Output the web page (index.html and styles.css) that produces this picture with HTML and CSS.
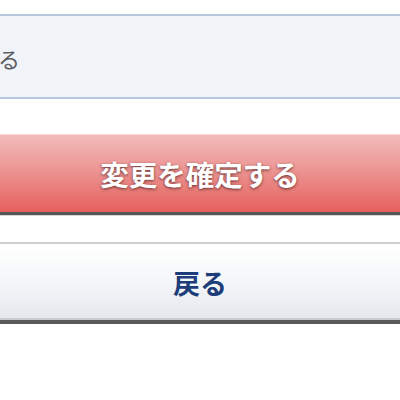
FILE: index.html
```html
<!DOCTYPE html>
<html lang="ja">
<head>
<meta charset="utf-8">
<link rel="stylesheet" href="styles.css">
</head>
<body>
<div class="page">
  <div class="field"><span class="field-text">る</span></div>
  <button class="btn btn-confirm" type="button">変更を確定する</button>
  <button class="btn btn-back" type="button">戻る</button>
</div>
</body>
</html>
```
FILE: styles.css
```css
html, body {
  margin: 0;
  padding: 0;
  background: #ffffff;
  width: 400px;
  height: 400px;
  overflow: hidden;
}
.page {
  display: flex;
  flex-direction: column;
  margin: 0 -10px;
  padding-top: 14px;
  font-family: "Noto Sans CJK JP", "Noto Sans", sans-serif;
}
.field {
  height: 81px;
  border-top: 2px solid #b7c8de;
  border-bottom: 2px solid #b7c8de;
  background: #f0f3f8;
  display: flex;
  align-items: center;
  padding-left: 10px;
  box-sizing: content-box;
}
.field-text {
  font-size: 22px;
  font-weight: 400;
  color: #5a5e64;
  line-height: 1;
  margin-left: -2px;
  margin-top: 2px;
}
.btn {
  display: flex;
  align-items: center;
  justify-content: center;
  width: 420px;
  border: none;
  padding: 0;
  margin: 0;
  font-family: "Noto Sans CJK JP", "Noto Sans", sans-serif;
  font-weight: bold;
  line-height: 1;
}
.btn-confirm {
  margin-top: 35px;
  height: 81px;
  border-top: 1px solid #f6d4d4;
  border-bottom: 3px solid #575757;
  background: linear-gradient(to bottom, #f3bcbc 0%, #ec9593 45%, #e5605b 100%);
  color: #ffffff;
  font-size: 28.5px;
  text-shadow: 0 1px 3px rgba(60, 20, 20, 0.75);
  box-shadow: 0 1px 0 #d8d8d8;
  padding-top: 2px;
}
.btn-back {
  margin-top: 27px;
  height: 82px;
  border-top: 2px solid #cfcfcf;
  border-bottom: 4px solid #5a5a5a;
  background: linear-gradient(to bottom, #ffffff 0%, #f4f6f8 50%, #e4e8ed 100%);
  color: #1d3d7a;
  font-size: 27px;
  box-shadow: inset 0 -2px 0 #c8cbd0;
  padding-top: 1px;
}
```
